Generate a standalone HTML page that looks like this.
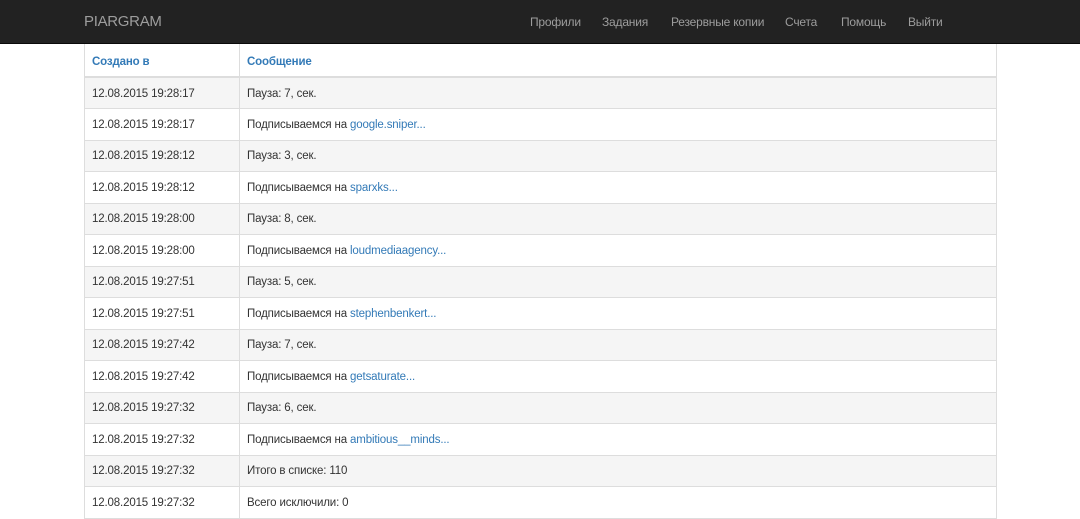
<!DOCTYPE html>
<html><head><meta charset="utf-8"><style>
body{margin:0;background:#fff;font-family:"Liberation Sans",Arial,sans-serif;font-size:11.5px;color:#333;width:1080px;height:514px;overflow:hidden}
.nav{height:43px;background:#222;border-bottom:1px solid #0a0a0a;position:relative}
.brand{position:absolute;left:84px;top:13px;font-size:15px;color:#9d9d9d;letter-spacing:-0.3px}
.links{position:absolute;top:15px;left:530px;font-size:12px;color:#9d9d9d;letter-spacing:-0.2px}
.links span{position:absolute;white-space:nowrap}
table{position:absolute;left:84px;top:44px;width:913px;border-collapse:collapse;border:1px solid #ddd;border-top:none}
td,th{border:1px solid #ddd;padding:1px 7px 0;text-align:left;height:31.5px;box-sizing:border-box;letter-spacing:-0.15px}
th{height:33px;padding-top:3px;color:#337ab7;font-weight:bold;border-bottom:2px solid #ddd;border-top:none}
td:first-child,th:first-child{width:155px}
tr:nth-child(even) td{background:#f5f5f5}
a{color:#337ab7;text-decoration:none}
</style></head><body>
<div class="nav"><div class="brand">PIARGRAM</div>
<div class="links"><span style="left:0">Профили</span><span style="left:72px">Задания</span><span style="left:141px">Резервные копии</span><span style="left:255px">Счета</span><span style="left:311px">Помощь</span><span style="left:378px">Выйти</span></div></div>
<table>
<tr><th>Создано в</th><th>Сообщение</th></tr>
<tr><td>12.08.2015 19:28:17</td><td>Пауза: 7, сек.</td></tr>
<tr><td>12.08.2015 19:28:17</td><td>Подписываемся на <a>google.sniper...</a></td></tr>
<tr><td>12.08.2015 19:28:12</td><td>Пауза: 3, сек.</td></tr>
<tr><td>12.08.2015 19:28:12</td><td>Подписываемся на <a>sparxks...</a></td></tr>
<tr><td>12.08.2015 19:28:00</td><td>Пауза: 8, сек.</td></tr>
<tr><td>12.08.2015 19:28:00</td><td>Подписываемся на <a>loudmediaagency...</a></td></tr>
<tr><td>12.08.2015 19:27:51</td><td>Пауза: 5, сек.</td></tr>
<tr><td>12.08.2015 19:27:51</td><td>Подписываемся на <a>stephenbenkert...</a></td></tr>
<tr><td>12.08.2015 19:27:42</td><td>Пауза: 7, сек.</td></tr>
<tr><td>12.08.2015 19:27:42</td><td>Подписываемся на <a>getsaturate...</a></td></tr>
<tr><td>12.08.2015 19:27:32</td><td>Пауза: 6, сек.</td></tr>
<tr><td>12.08.2015 19:27:32</td><td>Подписываемся на <a>ambitious__minds...</a></td></tr>
<tr><td>12.08.2015 19:27:32</td><td>Итого в списке: 110</td></tr>
<tr><td>12.08.2015 19:27:32</td><td>Всего исключили: 0</td></tr>
</table>
</body></html>
